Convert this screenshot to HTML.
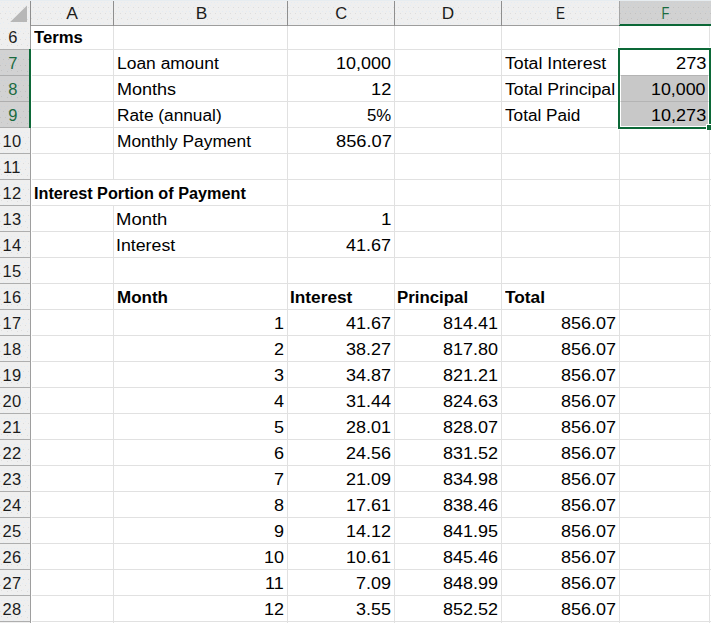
<!DOCTYPE html>
<html><head><meta charset="utf-8"><title>Loan</title>
<style>
html,body{margin:0;padding:0;background:#fff;}
body{width:711px;height:623px;overflow:hidden;position:relative;font-family:"Liberation Sans",sans-serif;}
#s{position:absolute;left:0;top:0;width:711px;height:623px;overflow:hidden;background:#fff;}
#s div,#s span{position:absolute;}
.h{background:#e1e1e1;height:1px;left:32px;width:679px;}
.v{background:#e1e1e1;width:1px;top:26px;}
.t{font-size:16px;line-height:20px;height:20px;white-space:pre;color:#000;transform-origin:0 0;}
.b{font-weight:bold;-webkit-text-stroke:0;}
.rn{font-size:16.5px;line-height:20px;height:20px;white-space:pre;color:#1c1c1c;}
.cl{font-size:16.5px;line-height:20px;height:20px;white-space:pre;color:#1c1c1c;}
.g{color:#1a6b3f;}

</style></head><body><!-- domain: Computer-Use (Excel spreadsheet screenshot) --><div id="s">
<div class="h" style="top:49px"></div>
<div class="h" style="top:75px"></div>
<div class="h" style="top:101px"></div>
<div class="h" style="top:127px"></div>
<div class="h" style="top:153px"></div>
<div class="h" style="top:179px"></div>
<div class="h" style="top:205px"></div>
<div class="h" style="top:231px"></div>
<div class="h" style="top:257px"></div>
<div class="h" style="top:283px"></div>
<div class="h" style="top:309px"></div>
<div class="h" style="top:335px"></div>
<div class="h" style="top:361px"></div>
<div class="h" style="top:387px"></div>
<div class="h" style="top:413px"></div>
<div class="h" style="top:439px"></div>
<div class="h" style="top:465px"></div>
<div class="h" style="top:491px"></div>
<div class="h" style="top:517px"></div>
<div class="h" style="top:543px"></div>
<div class="h" style="top:569px"></div>
<div class="h" style="top:595px"></div>
<div class="h" style="top:621px"></div>
<div class="v" style="left:113px;top:26px;height:154px"></div>
<div class="v" style="left:113px;top:205px;height:418px"></div>
<div class="v" style="left:287px;top:26px;height:597px"></div>
<div class="v" style="left:394px;top:26px;height:597px"></div>
<div class="v" style="left:501px;top:26px;height:597px"></div>
<div class="v" style="left:619px;top:26px;height:597px"></div>
<div class="v" style="left:709px;top:26px;height:597px"></div>
<div style="left:621px;top:76px;width:87px;height:50px;background:#c8c8c8"></div>
<div style="left:621px;top:75px;width:87px;height:1px;background:#b4b4b4"></div>
<div style="left:621px;top:101px;width:87px;height:1px;background:#b4b4b4"></div>
<div style="left:706px;top:124px;width:5px;height:6px;background:#fff"></div>
<div style="left:617px;top:47px;width:94px;height:1px;background:#fff"></div>
<div style="left:617px;top:47px;width:1px;height:83px;background:#fff"></div>
<div style="left:617px;top:129px;width:90px;height:1px;background:#fff"></div>
<div style="left:618px;top:48px;width:93px;height:2px;background:#0c6837"></div>
<div style="left:618px;top:48px;width:2px;height:81px;background:#0c6837"></div>
<div style="left:709px;top:48px;width:2px;height:76px;background:#0c6837"></div>
<div style="left:618px;top:127px;width:88px;height:2px;background:#0c6837"></div>
<div style="left:707px;top:125px;width:4px;height:5px;background:#0c6837"></div>
<div id="ch" style="left:0;top:0;width:711px;height:26px;background:#efefef"></div>
<div style="left:0;top:0;width:711px;height:1px;background:#e6ecf0"></div>
<div style="left:620px;top:1px;width:91px;height:24px;background:#d2d2d2"></div>
<svg style="position:absolute;left:0px;top:1px" width="711" height="24"><defs><pattern id="d1" x="0" y="-1" width="10" height="26" patternUnits="userSpaceOnUse"><rect x="3" y="7" width="1" height="1" fill="#dddddd"/><rect x="8" y="7" width="1" height="1" fill="#dddddd"/><rect x="0" y="13" width="1" height="1" fill="#dddddd"/><rect x="5" y="13" width="1" height="1" fill="#dddddd"/><rect x="1" y="18" width="1" height="1" fill="#dddddd"/><rect x="7" y="19" width="1" height="1" fill="#dddddd"/><rect x="1" y="2" width="1" height="1" fill="#e4ecf4"/><rect x="4" y="2" width="1" height="1" fill="#e4ecf4"/><rect x="7" y="2" width="1" height="1" fill="#e4ecf4"/><rect x="0" y="5" width="1" height="1" fill="#e4ecf4"/><rect x="5" y="5" width="1" height="1" fill="#e4ecf4"/><rect x="2" y="11" width="1" height="1" fill="#e4ecf4"/><rect x="6" y="11" width="1" height="1" fill="#e4ecf4"/><rect x="9" y="11" width="1" height="1" fill="#e4ecf4"/><rect x="3" y="17" width="1" height="1" fill="#e4ecf4"/><rect x="8" y="17" width="1" height="1" fill="#e4ecf4"/><rect x="3" y="22" width="1" height="1" fill="#e4ecf4"/><rect x="0" y="23" width="1" height="1" fill="#e4ecf4"/><rect x="8" y="23" width="1" height="1" fill="#e4ecf4"/></pattern></defs><rect width="711" height="24" fill="url(#d1)"/></svg>
<svg style="position:absolute;left:620px;top:1px" width="91" height="23"><defs><pattern id="d2" x="0" y="-1" width="10" height="26" patternUnits="userSpaceOnUse"><rect x="3" y="7" width="1" height="1" fill="#c2c2c2"/><rect x="8" y="7" width="1" height="1" fill="#c2c2c2"/><rect x="0" y="13" width="1" height="1" fill="#c2c2c2"/><rect x="5" y="13" width="1" height="1" fill="#c2c2c2"/><rect x="1" y="18" width="1" height="1" fill="#c2c2c2"/><rect x="7" y="19" width="1" height="1" fill="#c2c2c2"/><rect x="1" y="2" width="1" height="1" fill="#cad0d6"/><rect x="4" y="2" width="1" height="1" fill="#cad0d6"/><rect x="7" y="2" width="1" height="1" fill="#cad0d6"/><rect x="0" y="5" width="1" height="1" fill="#cad0d6"/><rect x="5" y="5" width="1" height="1" fill="#cad0d6"/><rect x="2" y="11" width="1" height="1" fill="#cad0d6"/><rect x="6" y="11" width="1" height="1" fill="#cad0d6"/><rect x="9" y="11" width="1" height="1" fill="#cad0d6"/><rect x="3" y="17" width="1" height="1" fill="#cad0d6"/><rect x="8" y="17" width="1" height="1" fill="#cad0d6"/><rect x="3" y="22" width="1" height="1" fill="#cad0d6"/><rect x="0" y="23" width="1" height="1" fill="#cad0d6"/><rect x="8" y="23" width="1" height="1" fill="#cad0d6"/></pattern></defs><rect width="91" height="23" fill="url(#d2)"/></svg>
<div style="left:31px;top:25px;width:680px;height:1px;background:#9d9d9d"></div>
<div style="left:619px;top:24px;width:92px;height:2px;background:#0c6837"></div>
<div style="left:30px;top:1px;width:1px;height:25px;background:#8e8e8e"></div>
<div style="left:113px;top:1px;width:1px;height:25px;background:#8e8e8e"></div>
<div style="left:287px;top:1px;width:1px;height:25px;background:#8e8e8e"></div>
<div style="left:394px;top:1px;width:1px;height:25px;background:#8e8e8e"></div>
<div style="left:501px;top:1px;width:1px;height:25px;background:#8e8e8e"></div>
<div style="left:619px;top:1px;width:1px;height:24px;background:#a4a4a4"></div>
<svg style="position:absolute;left:0;top:0" width="30" height="25"><path d="M27 5.5V22H10.2Z" fill="#b7b7b7"/></svg>
<div id="rh" style="left:0;top:26px;width:30px;height:597px;background:#efefef"></div>
<div style="left:30px;top:26px;width:1px;height:597px;background:#9e9e9e"></div>
<div style="left:0;top:50px;width:29px;height:78px;background:#d2d2d2"></div>
<svg style="position:absolute;left:0px;top:26px" width="30" height="597"><defs><pattern id="d3" x="0" y="0" width="10" height="26" patternUnits="userSpaceOnUse"><rect x="3" y="7" width="1" height="1" fill="#dddddd"/><rect x="8" y="7" width="1" height="1" fill="#dddddd"/><rect x="0" y="13" width="1" height="1" fill="#dddddd"/><rect x="5" y="13" width="1" height="1" fill="#dddddd"/><rect x="1" y="18" width="1" height="1" fill="#dddddd"/><rect x="7" y="19" width="1" height="1" fill="#dddddd"/><rect x="1" y="2" width="1" height="1" fill="#e4ecf4"/><rect x="4" y="2" width="1" height="1" fill="#e4ecf4"/><rect x="7" y="2" width="1" height="1" fill="#e4ecf4"/><rect x="0" y="5" width="1" height="1" fill="#e4ecf4"/><rect x="5" y="5" width="1" height="1" fill="#e4ecf4"/><rect x="2" y="11" width="1" height="1" fill="#e4ecf4"/><rect x="6" y="11" width="1" height="1" fill="#e4ecf4"/><rect x="9" y="11" width="1" height="1" fill="#e4ecf4"/><rect x="3" y="17" width="1" height="1" fill="#e4ecf4"/><rect x="8" y="17" width="1" height="1" fill="#e4ecf4"/><rect x="3" y="22" width="1" height="1" fill="#e4ecf4"/><rect x="0" y="23" width="1" height="1" fill="#e4ecf4"/><rect x="8" y="23" width="1" height="1" fill="#e4ecf4"/></pattern></defs><rect width="30" height="597" fill="url(#d3)"/></svg>
<svg style="position:absolute;left:0px;top:50px" width="29" height="78"><defs><pattern id="d4" x="0" y="-24" width="10" height="26" patternUnits="userSpaceOnUse"><rect x="3" y="7" width="1" height="1" fill="#c2c2c2"/><rect x="8" y="7" width="1" height="1" fill="#c2c2c2"/><rect x="0" y="13" width="1" height="1" fill="#c2c2c2"/><rect x="5" y="13" width="1" height="1" fill="#c2c2c2"/><rect x="1" y="18" width="1" height="1" fill="#c2c2c2"/><rect x="7" y="19" width="1" height="1" fill="#c2c2c2"/><rect x="1" y="2" width="1" height="1" fill="#cad0d6"/><rect x="4" y="2" width="1" height="1" fill="#cad0d6"/><rect x="7" y="2" width="1" height="1" fill="#cad0d6"/><rect x="0" y="5" width="1" height="1" fill="#cad0d6"/><rect x="5" y="5" width="1" height="1" fill="#cad0d6"/><rect x="2" y="11" width="1" height="1" fill="#cad0d6"/><rect x="6" y="11" width="1" height="1" fill="#cad0d6"/><rect x="9" y="11" width="1" height="1" fill="#cad0d6"/><rect x="3" y="17" width="1" height="1" fill="#cad0d6"/><rect x="8" y="17" width="1" height="1" fill="#cad0d6"/><rect x="3" y="22" width="1" height="1" fill="#cad0d6"/><rect x="0" y="23" width="1" height="1" fill="#cad0d6"/><rect x="8" y="23" width="1" height="1" fill="#cad0d6"/></pattern></defs><rect width="29" height="78" fill="url(#d4)"/></svg>
<div style="left:0;top:49px;width:30px;height:1px;background:#aeaeae"></div>
<div style="left:0;top:75px;width:30px;height:1px;background:#aeaeae"></div>
<div style="left:0;top:101px;width:30px;height:1px;background:#aeaeae"></div>
<div style="left:0;top:127px;width:30px;height:1px;background:#aeaeae"></div>
<div style="left:0;top:153px;width:30px;height:1px;background:#aeaeae"></div>
<div style="left:0;top:179px;width:30px;height:1px;background:#aeaeae"></div>
<div style="left:0;top:205px;width:30px;height:1px;background:#aeaeae"></div>
<div style="left:0;top:231px;width:30px;height:1px;background:#aeaeae"></div>
<div style="left:0;top:257px;width:30px;height:1px;background:#aeaeae"></div>
<div style="left:0;top:283px;width:30px;height:1px;background:#aeaeae"></div>
<div style="left:0;top:309px;width:30px;height:1px;background:#aeaeae"></div>
<div style="left:0;top:335px;width:30px;height:1px;background:#aeaeae"></div>
<div style="left:0;top:361px;width:30px;height:1px;background:#aeaeae"></div>
<div style="left:0;top:387px;width:30px;height:1px;background:#aeaeae"></div>
<div style="left:0;top:413px;width:30px;height:1px;background:#aeaeae"></div>
<div style="left:0;top:439px;width:30px;height:1px;background:#aeaeae"></div>
<div style="left:0;top:465px;width:30px;height:1px;background:#aeaeae"></div>
<div style="left:0;top:491px;width:30px;height:1px;background:#aeaeae"></div>
<div style="left:0;top:517px;width:30px;height:1px;background:#aeaeae"></div>
<div style="left:0;top:543px;width:30px;height:1px;background:#aeaeae"></div>
<div style="left:0;top:569px;width:30px;height:1px;background:#aeaeae"></div>
<div style="left:0;top:595px;width:30px;height:1px;background:#aeaeae"></div>
<div style="left:0;top:621px;width:30px;height:1px;background:#aeaeae"></div>
<div style="left:29px;top:49px;width:2px;height:79px;background:#0c6837"></div>
<span class="cl" id="col0" style="left:31px;width:82px;top:3px;text-align:center;margin-left:0.35px;transform:scaleX(1.06)">A</span>
<span class="cl" id="col1" style="left:114px;width:173px;top:3px;text-align:center;margin-left:0.55px;transform:scaleX(1.05)">B</span>
<span class="cl" id="col2" style="left:288px;width:106px;top:3px;text-align:center;margin-left:0.30px;transform:scaleX(1.00)">C</span>
<span class="cl" id="col3" style="left:395px;width:106px;top:3px;text-align:center;margin-left:-0.10px;transform:scaleX(1.04)">D</span>
<span class="cl" id="col4" style="left:502px;width:117px;top:3px;text-align:center;margin-left:0.05px;transform:scaleX(0.82)">E</span>
<span class="cl g" id="col5" style="left:620px;width:89px;top:3px;text-align:center;margin-left:0.60px;transform:scaleX(0.78)">F</span>
<span class="rn" id="rn6" style="left:0;width:26px;top:27px;text-align:center;margin-left:-0.10px;letter-spacing:0.0px">6</span>
<span class="rn g" id="rn7" style="left:0;width:26px;top:53px;text-align:center;margin-left:-0.10px;letter-spacing:0.0px">7</span>
<span class="rn g" id="rn8" style="left:0;width:26px;top:79px;text-align:center;margin-left:-0.10px;letter-spacing:0.0px">8</span>
<span class="rn g" id="rn9" style="left:0;width:26px;top:105px;text-align:center;margin-left:-0.10px;letter-spacing:0.0px">9</span>
<span class="rn" id="rn10" style="left:0;width:26px;top:131px;text-align:center;margin-left:-1.10px;letter-spacing:0.3px">10</span>
<span class="rn" id="rn11" style="left:0;width:26px;top:157px;text-align:center;margin-left:-1.10px;letter-spacing:0.3px">11</span>
<span class="rn" id="rn12" style="left:0;width:26px;top:183px;text-align:center;margin-left:-1.10px;letter-spacing:0.3px">12</span>
<span class="rn" id="rn13" style="left:0;width:26px;top:209px;text-align:center;margin-left:-1.10px;letter-spacing:0.3px">13</span>
<span class="rn" id="rn14" style="left:0;width:26px;top:235px;text-align:center;margin-left:-1.10px;letter-spacing:0.3px">14</span>
<span class="rn" id="rn15" style="left:0;width:26px;top:261px;text-align:center;margin-left:-1.10px;letter-spacing:0.3px">15</span>
<span class="rn" id="rn16" style="left:0;width:26px;top:287px;text-align:center;margin-left:-1.10px;letter-spacing:0.3px">16</span>
<span class="rn" id="rn17" style="left:0;width:26px;top:313px;text-align:center;margin-left:-1.10px;letter-spacing:0.3px">17</span>
<span class="rn" id="rn18" style="left:0;width:26px;top:339px;text-align:center;margin-left:-1.10px;letter-spacing:0.3px">18</span>
<span class="rn" id="rn19" style="left:0;width:26px;top:365px;text-align:center;margin-left:-1.10px;letter-spacing:0.3px">19</span>
<span class="rn" id="rn20" style="left:0;width:26px;top:391px;text-align:center;margin-left:-1.10px;letter-spacing:0.3px">20</span>
<span class="rn" id="rn21" style="left:0;width:26px;top:417px;text-align:center;margin-left:-1.10px;letter-spacing:0.3px">21</span>
<span class="rn" id="rn22" style="left:0;width:26px;top:443px;text-align:center;margin-left:-1.10px;letter-spacing:0.3px">22</span>
<span class="rn" id="rn23" style="left:0;width:26px;top:469px;text-align:center;margin-left:-1.10px;letter-spacing:0.3px">23</span>
<span class="rn" id="rn24" style="left:0;width:26px;top:495px;text-align:center;margin-left:-1.10px;letter-spacing:0.3px">24</span>
<span class="rn" id="rn25" style="left:0;width:26px;top:521px;text-align:center;margin-left:-1.10px;letter-spacing:0.3px">25</span>
<span class="rn" id="rn26" style="left:0;width:26px;top:547px;text-align:center;margin-left:-1.10px;letter-spacing:0.3px">26</span>
<span class="rn" id="rn27" style="left:0;width:26px;top:573px;text-align:center;margin-left:-1.10px;letter-spacing:0.3px">27</span>
<span class="rn" id="rn28" style="left:0;width:26px;top:599px;text-align:center;margin-left:-1.10px;letter-spacing:0.3px">28</span>
<span class="rn" id="rn29" style="left:0;width:26px;top:625px;text-align:center;margin-left:-1.10px;letter-spacing:0.3px">29</span>
<span class="t b" id="t0" style="left:33.74px;top:28px;transform:scaleX(1.0430)">Terms</span>
<span class="t" id="t1" style="left:116.80px;top:54px;transform:scaleX(1.0896)">Loan amount</span>
<span class="t" id="t2" style="left:335.98px;top:54px;transform:scaleX(1.1223)">10,000</span>
<span class="t" id="t3" style="left:504.93px;top:54px;transform:scaleX(1.1057)">Total Interest</span>
<span class="t" id="t4" style="left:675.76px;top:54px;transform:scaleX(1.1436)">273</span>
<span class="t" id="t5" style="left:116.80px;top:80px;transform:scaleX(1.1268)">Months</span>
<span class="t" id="t6" style="left:371.43px;top:80px;transform:scaleX(1.1398)">12</span>
<span class="t" id="t7" style="left:504.93px;top:80px;transform:scaleX(1.1056)">Total Principal</span>
<span class="t" id="t8" style="left:650.93px;top:80px;transform:scaleX(1.1134)">10,000</span>
<span class="t" id="t9" style="left:116.80px;top:106px;transform:scaleX(1.0798)">Rate (annual)</span>
<span class="t" id="t10" style="left:367.17px;top:106px;transform:scaleX(1.0464)">5%</span>
<span class="t" id="t11" style="left:504.93px;top:106px;transform:scaleX(1.0731)">Total Paid</span>
<span class="t" id="t12" style="left:651.48px;top:106px;transform:scaleX(1.1271)">10,273</span>
<span class="t" id="t13" style="left:116.80px;top:132px;transform:scaleX(1.0838)">Monthly Payment</span>
<span class="t" id="t14" style="left:335.94px;top:132px;transform:scaleX(1.1417)">856.07</span>
<span class="t b" id="t15" style="left:33.82px;top:184px;transform:scaleX(1.0138)">Interest Portion of Payment</span>
<span class="t" id="t16" style="left:116.45px;top:210px;transform:scaleX(1.1557)">Month</span>
<span class="t" id="t17" style="left:381.22px;top:210px;transform:scaleX(1.1772)">1</span>
<span class="t" id="t18" style="left:116.45px;top:236px;transform:scaleX(1.1100)">Interest</span>
<span class="t" id="t19" style="left:345.82px;top:236px;transform:scaleX(1.1257)">41.67</span>
<span class="t b" id="t20" style="left:116.87px;top:288px;transform:scaleX(1.0622)">Month</span>
<span class="t b" id="t21" style="left:290.41px;top:288px;transform:scaleX(1.0787)">Interest</span>
<span class="t b" id="t22" style="left:397.21px;top:288px;transform:scaleX(1.0518)">Principal</span>
<span class="t b" id="t23" style="left:504.99px;top:288px;transform:scaleX(1.0794)">Total</span>
<span class="t" id="t24" style="left:273.58px;top:314px;transform:scaleX(1.1240)">1</span>
<span class="t" id="t25" style="left:346.11px;top:314px;transform:scaleX(1.1240)">41.67</span>
<span class="t" id="t26" style="left:442.58px;top:314px;transform:scaleX(1.1240)">814.41</span>
<span class="t" id="t27" style="left:560.61px;top:314px;transform:scaleX(1.1240)">856.07</span>
<span class="t" id="t28" style="left:273.62px;top:340px;transform:scaleX(1.1240)">2</span>
<span class="t" id="t29" style="left:346.11px;top:340px;transform:scaleX(1.1240)">38.27</span>
<span class="t" id="t30" style="left:443.10px;top:340px;transform:scaleX(1.1240)">817.80</span>
<span class="t" id="t31" style="left:560.61px;top:340px;transform:scaleX(1.1240)">856.07</span>
<span class="t" id="t32" style="left:274.37px;top:366px;transform:scaleX(1.1240)">3</span>
<span class="t" id="t33" style="left:346.11px;top:366px;transform:scaleX(1.1240)">34.87</span>
<span class="t" id="t34" style="left:442.58px;top:366px;transform:scaleX(1.1240)">821.21</span>
<span class="t" id="t35" style="left:560.61px;top:366px;transform:scaleX(1.1240)">856.07</span>
<span class="t" id="t36" style="left:274.08px;top:392px;transform:scaleX(1.1240)">4</span>
<span class="t" id="t37" style="left:345.95px;top:392px;transform:scaleX(1.1240)">31.44</span>
<span class="t" id="t38" style="left:443.37px;top:392px;transform:scaleX(1.1240)">824.63</span>
<span class="t" id="t39" style="left:560.61px;top:392px;transform:scaleX(1.1240)">856.07</span>
<span class="t" id="t40" style="left:274.29px;top:418px;transform:scaleX(1.1240)">5</span>
<span class="t" id="t41" style="left:346.07px;top:418px;transform:scaleX(1.1240)">28.01</span>
<span class="t" id="t42" style="left:442.62px;top:418px;transform:scaleX(1.1240)">828.07</span>
<span class="t" id="t43" style="left:560.61px;top:418px;transform:scaleX(1.1240)">856.07</span>
<span class="t" id="t44" style="left:274.37px;top:444px;transform:scaleX(1.1240)">6</span>
<span class="t" id="t45" style="left:345.87px;top:444px;transform:scaleX(1.1240)">24.56</span>
<span class="t" id="t46" style="left:442.62px;top:444px;transform:scaleX(1.1240)">831.52</span>
<span class="t" id="t47" style="left:560.61px;top:444px;transform:scaleX(1.1240)">856.07</span>
<span class="t" id="t48" style="left:273.62px;top:470px;transform:scaleX(1.1240)">7</span>
<span class="t" id="t49" style="left:346.07px;top:470px;transform:scaleX(1.1240)">21.09</span>
<span class="t" id="t50" style="left:443.37px;top:470px;transform:scaleX(1.1240)">834.98</span>
<span class="t" id="t51" style="left:560.61px;top:470px;transform:scaleX(1.1240)">856.07</span>
<span class="t" id="t52" style="left:274.37px;top:496px;transform:scaleX(1.1240)">8</span>
<span class="t" id="t53" style="left:346.07px;top:496px;transform:scaleX(1.1240)">17.61</span>
<span class="t" id="t54" style="left:443.37px;top:496px;transform:scaleX(1.1240)">838.46</span>
<span class="t" id="t55" style="left:560.61px;top:496px;transform:scaleX(1.1240)">856.07</span>
<span class="t" id="t56" style="left:273.58px;top:522px;transform:scaleX(1.1240)">9</span>
<span class="t" id="t57" style="left:346.11px;top:522px;transform:scaleX(1.1240)">14.12</span>
<span class="t" id="t58" style="left:443.29px;top:522px;transform:scaleX(1.1240)">841.95</span>
<span class="t" id="t59" style="left:560.61px;top:522px;transform:scaleX(1.1240)">856.07</span>
<span class="t" id="t60" style="left:264.10px;top:548px;transform:scaleX(1.1240)">10</span>
<span class="t" id="t61" style="left:346.07px;top:548px;transform:scaleX(1.1240)">10.61</span>
<span class="t" id="t62" style="left:443.37px;top:548px;transform:scaleX(1.1240)">845.46</span>
<span class="t" id="t63" style="left:560.61px;top:548px;transform:scaleX(1.1240)">856.07</span>
<span class="t" id="t64" style="left:265.19px;top:574px;transform:scaleX(1.1240)">11</span>
<span class="t" id="t65" style="left:356.07px;top:574px;transform:scaleX(1.1240)">7.09</span>
<span class="t" id="t66" style="left:442.58px;top:574px;transform:scaleX(1.1240)">848.99</span>
<span class="t" id="t67" style="left:560.61px;top:574px;transform:scaleX(1.1240)">856.07</span>
<span class="t" id="t68" style="left:263.62px;top:600px;transform:scaleX(1.1240)">12</span>
<span class="t" id="t69" style="left:355.79px;top:600px;transform:scaleX(1.1240)">3.55</span>
<span class="t" id="t70" style="left:442.62px;top:600px;transform:scaleX(1.1240)">852.52</span>
<span class="t" id="t71" style="left:560.61px;top:600px;transform:scaleX(1.1240)">856.07</span>
</div></body></html>
